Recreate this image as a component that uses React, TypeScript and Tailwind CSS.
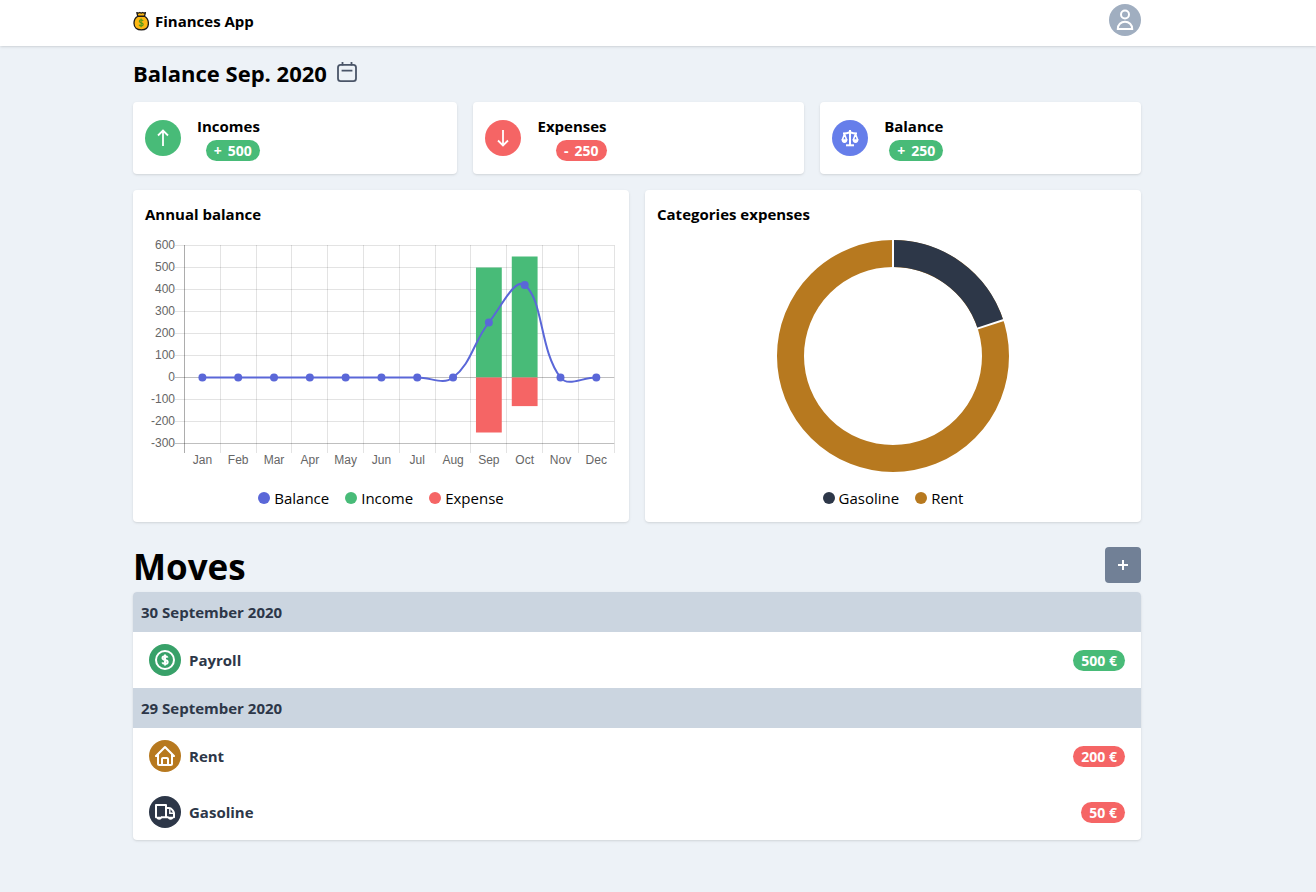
import type { ReactNode } from "react";
import { BiHome } from "react-icons/bi";

const MONTHS = ["Jan", "Feb", "Mar", "Apr", "May", "Jun", "Jul", "Aug", "Sep", "Oct", "Nov", "Dec"];
const BALANCE = [0, 0, 0, 0, 0, 0, 0, 0, 250, 420, 0, 0];
const INCOME = [0, 0, 0, 0, 0, 0, 0, 0, 500, 550, 0, 0];
const EXPENSE = [0, 0, 0, 0, 0, 0, 0, 0, 250, 130, 0, 0];
const TICKS = [600, 500, 400, 300, 200, 100, 0, -100, -200, -300];

const LEFT = 39.5;
const RIGHT = 469.2;
const STEP = (RIGHT - LEFT) / 12;
const xAt = (i: number) => LEFT + STEP * (i + 0.5);
const yAt = (v: number) => 139.5 - v * 0.22;

type Point = { x: number; y: number };

// Cardinal-like spline whose handles are weighted by the distance to each neighbour.
function spline(points: Point[], tension: number): string {
  const handles = points.map((cur, i) => {
    const prev = points[i - 1] ?? cur;
    const next = points[i + 1] ?? cur;
    const d01 = Math.hypot(cur.x - prev.x, cur.y - prev.y);
    const d12 = Math.hypot(next.x - cur.x, next.y - cur.y);
    const fa = (tension * d01) / (d01 + d12);
    const fb = (tension * d12) / (d01 + d12);
    return {
      before: { x: cur.x - fa * (next.x - prev.x), y: cur.y - fa * (next.y - prev.y) },
      after: { x: cur.x + fb * (next.x - prev.x), y: cur.y + fb * (next.y - prev.y) },
    };
  });
  return points
    .map((p, i) => {
      if (i === 0) return `M${p.x} ${p.y}`;
      const a = handles[i - 1].after;
      const b = handles[i].before;
      return `C${a.x} ${a.y} ${b.x} ${b.y} ${p.x} ${p.y}`;
    })
    .join("");
}

function AnnualChart() {
  const points = BALANCE.map((v, i) => ({ x: xAt(i), y: yAt(v) }));
  return (
    <svg viewBox="0 0 472 236" className="block w-full" role="img" aria-label="Annual balance">
      {TICKS.map((t) => (
        <g key={t}>
          <line
            x1={30}
            x2={RIGHT}
            y1={yAt(t)}
            y2={yAt(t)}
            stroke="#000"
            strokeOpacity={t === 0 || t === -300 ? 0.25 : 0.11}
          />
          <text x={30} y={yAt(t) + 3.5} textAnchor="end" className="fill-[#666] text-xs">
            {t}
          </text>
        </g>
      ))}
      {Array.from({ length: 13 }, (_, i) => {
        const x = Math.floor(LEFT + STEP * i) + 0.5;
        return (
          <line key={i} x1={x} x2={x} y1={7} y2={215} stroke="#000" strokeOpacity={i === 0 ? 0.32 : 0.11} />
        );
      })}
      {MONTHS.map((m, i) => (
        <g key={m}>
          <rect x={xAt(i) - 12.9} y={yAt(INCOME[i])} width={25.8} height={INCOME[i] * 0.22} fill="#48bb78" />
          <rect x={xAt(i) - 12.9} y={yAt(0)} width={25.8} height={EXPENSE[i] * 0.22} fill="#f56565" />
          <text x={xAt(i)} y={226} textAnchor="middle" className="fill-[#666] text-xs">
            {m}
          </text>
        </g>
      ))}
      <path d={spline(points, 0.4)} fill="none" stroke="#5a67d8" strokeWidth={2} />
      {points.map((p) => (
        <circle key={p.x} cx={p.x} cy={p.y} r={4} fill="#5a67d8" />
      ))}
    </svg>
  );
}

function CategoriesChart() {
  const cx = 236;
  const cy = 118;
  const r = 102.5;
  const angle = 0.2 * Math.PI * 2;
  const ex = cx + r * Math.sin(angle);
  const ey = cy - r * Math.cos(angle);
  const ray = (a: number) => (
    <line
      x1={cx + 87 * Math.sin(a)}
      y1={cy - 87 * Math.cos(a)}
      x2={cx + 118 * Math.sin(a)}
      y2={cy - 118 * Math.cos(a)}
      stroke="#fff"
      strokeWidth={2}
    />
  );
  return (
    <svg viewBox="0 0 472 236" className="block w-full" role="img" aria-label="Categories expenses">
      <circle cx={cx} cy={cy} r={r} fill="none" stroke="#b7791f" strokeWidth={27} />
      <path d={`M${cx} ${cy - r}A${r} ${r} 0 0 1 ${ex} ${ey}`} fill="none" stroke="#2d3748" strokeWidth={27} />
      {ray(0)}
      {ray(angle)}
    </svg>
  );
}

function MoneyBag() {
  return (
    <svg viewBox="0 0 16 20" className="h-5 w-4" aria-hidden="true">
      <path
        d="M3.800 1.600l1.500.5 1.500-.6 1.400.6 1.500-.6 1.400.6 1.300-.5-.9 3.700c2.400 1.400 3.900 4.100 3.900 7 0 4.100-2.700 6.600-7 6.600S1 16.400 1 12.300c0-2.900 1.400-5.600 3.800-7z"
        fill="#fdb813"
        stroke="#1c1917"
        strokeWidth="1.300"
        strokeLinejoin="round"
      />
      <path d="M4.800 5.200h6.400" stroke="#1c1917" strokeWidth="1.400" strokeLinecap="round" />
      <path
        d="M10.100 10c-.3-.8-1-1.200-1.900-1.200-1.200 0-1.900.6-1.900 1.500 0 2.100 3.900 1 3.900 3.100 0 1-.8 1.600-2 1.600-1.100 0-1.800-.5-2.200-1.300M8.100 7.600v8.600"
        fill="none"
        stroke="#4d9a1c"
        strokeWidth="1.100"
      />
    </svg>
  );
}

function Icon({ children, width = 2 }: { children: ReactNode; width?: number }) {
  return (
    <svg
      viewBox="0 0 24 24"
      className="size-6"
      fill="none"
      stroke="currentColor"
      strokeWidth={width}
      aria-hidden="true"
    >
      {children}
    </svg>
  );
}

const UserIcon = () => (
  <Icon>
    <circle cx="12" cy="6.500" r="4" />
    <path d="M4.800 21h14.400c0-4.200-3.100-7.200-7.200-7.200s-7.200 3-7.200 7.200z" />
  </Icon>
);

const CalendarIcon = () => (
  <Icon width={1.8}>
    <rect x="3" y="4.900" width="18" height="16.200" rx="2.600" />
    <path d="M7.500 2v3.500M16.500 2v3.500M6.600 10.600h10.800" />
  </Icon>
);

const ArrowUpIcon = () => (
  <Icon width={1.8}>
    <path d="M12 20V5M7 9.500l5-5 5 5" />
  </Icon>
);

const ArrowDownIcon = () => (
  <Icon width={1.8}>
    <path d="M12 4v15M7 14.500l5 5 5-5" />
  </Icon>
);

const ScaleIcon = () => (
  <Icon width={1.6}>
    <path d="M12 4v15.500M5 7.600c2.500 0 4.500-.3 7-1.300 2.500 1 4.500 1.300 7 1.300" strokeWidth="2" />
    <path d="M8 19.300h8" strokeWidth="2" />
    <path d="M6.500 8l-2.200 6M6.500 8l2.200 6M17.500 8l-2.200 6M17.500 8l2.200 6" strokeWidth="1.600" />
    <path
      d="M3.500 13.200h6c0 2.300-1.200 3.700-3 3.700s-3-1.400-3-3.700zM14.500 13.200h6c0 2.300-1.200 3.700-3 3.700s-3-1.400-3-3.700z"
      fill="currentColor"
      stroke="none"
    />
  </Icon>
);

const DollarIcon = () => (
  <Icon>
    <circle cx="12" cy="12" r="9" />
    <path d="M14.600 9.600c-.4-.9-1.400-1.300-2.600-1.300-1.500 0-2.500.7-2.500 1.800 0 2.600 5.200 1.200 5.200 3.800 0 1.200-1.100 1.900-2.700 1.900-1.300 0-2.300-.5-2.700-1.500M12 6.400v11.200" />
  </Icon>
);

const TruckIcon = () => (
  <Icon>
    <path
      d="M4 17.300H3V5h10v12.300H8M13 8h3c1.200 0 2.200.5 3 1.500l1.200 1.600c.5.700.8 1.400.8 2.200v4h-1M15.500 17.300H13"
      strokeLinejoin="round"
    />
    <path d="M16.800 8v5.200H21" strokeWidth="1.400" />
    <path
      d="M3.400 16.800a2.800 3 0 0 0 5.600 0zM14.800 16.800a2.800 3 0 0 0 5.600 0z"
      fill="currentColor"
      stroke="none"
    />
  </Icon>
);

const PlusIcon = () => (
  <Icon width={2}>
    <path d="M12 7v10M7 12h10" />
  </Icon>
);

function Pill({ positive, children }: { positive: boolean; children: ReactNode }) {
  return (
    <span
      className={`inline-flex rounded-full px-2 text-sm leading-[21px] font-bold text-white ${
        positive ? "bg-[#48bb78]" : "bg-[#f56565]"
      }`}
    >
      {children}
    </span>
  );
}

type SummaryProps = { title: string; amount: number; color: string; icon: ReactNode };

function Summary({ title, amount, color, icon }: SummaryProps) {
  return (
    <section className="flex flex-auto items-center gap-4 rounded bg-white p-3 shadow">
      <span className={`flex size-9 items-center justify-center rounded-full text-white ${color}`}>{icon}</span>
      <div className="flex flex-col items-end">
        <h2 className="leading-6 font-bold">{title}</h2>
        <div className="flex h-6 items-center">
          <Pill positive={amount > 0}>
            <span className="flex gap-1.5">
              <span>{amount > 0 ? "+" : "-"}</span>
              <span>{Math.abs(amount)}</span>
            </span>
          </Pill>
        </div>
      </div>
    </section>
  );
}

type ChartCardProps = { title: string; legend: { label: string; color: string }[]; children: ReactNode };

function ChartCard({ title, legend, children }: ChartCardProps) {
  return (
    <section className="flex min-w-0 flex-1 flex-col gap-3 rounded bg-white p-3 shadow">
      <h2 className="leading-6 font-bold">{title}</h2>
      <div className="font-['Liberation_Sans',Arial,sans-serif]">{children}</div>
      <ul className="flex justify-center gap-4">
        {legend.map((item) => (
          <li key={item.label} className="flex items-center gap-1 leading-6">
            <span className={`size-3 rounded-full ${item.color}`} />
            {item.label}
          </li>
        ))}
      </ul>
    </section>
  );
}

type Move = { name: string; amount: string; positive: boolean; color: string; icon: ReactNode };

const DAYS: { date: string; moves: Move[] }[] = [
  {
    date: "30 September 2020",
    moves: [{ name: "Payroll", amount: "500 €", positive: true, color: "bg-[#38a169]", icon: <DollarIcon /> }],
  },
  {
    date: "29 September 2020",
    moves: [
      { name: "Rent", amount: "200 €", positive: false, color: "bg-[#b7791f]", icon: <BiHome className="size-6" /> },
      { name: "Gasoline", amount: "50 €", positive: false, color: "bg-[#2d3748]", icon: <TruckIcon /> },
    ],
  },
];

export default function App() {
  return (
    <div className="min-h-screen bg-[#edf2f7] font-['Open_Sans','Noto_Sans',sans-serif] text-[15px] text-black">
      <header className="bg-white pt-1 pr-[42px] pb-2.5 shadow">
        <div className="mx-auto flex max-w-[1008px] items-center justify-between">
          <a href="#" className="flex items-center gap-1.5 pt-0.5 leading-6 font-bold">
            <MoneyBag />
            Finances App
          </a>
          <button
            type="button"
            aria-label="Account"
            className="flex size-8 items-center justify-center rounded-full bg-[#a0aec0] text-white"
          >
            <UserIcon />
          </button>
        </div>
      </header>
      <div className="pr-[42px]">
        <main className="mx-auto flex max-w-[1008px] flex-col">
          <div className="flex h-14 items-center gap-2">
            <h1 className="pb-0.5 text-[22px] font-bold">Balance Sep. 2020</h1>
            <button type="button" aria-label="Choose month" className="pb-1 text-[#4a5568]">
              <CalendarIcon />
            </button>
          </div>
          <div className="flex gap-4">
            <Summary title="Incomes" amount={500} color="bg-[#48bb78]" icon={<ArrowUpIcon />} />
            <Summary title="Expenses" amount={-250} color="bg-[#f56565]" icon={<ArrowDownIcon />} />
            <Summary title="Balance" amount={250} color="bg-[#667eea]" icon={<ScaleIcon />} />
          </div>
          <div className="mt-4 flex gap-4">
            <ChartCard
              title="Annual balance"
              legend={[
                { label: "Balance", color: "bg-[#5a67d8]" },
                { label: "Income", color: "bg-[#48bb78]" },
                { label: "Expense", color: "bg-[#f56565]" },
              ]}
            >
              <AnnualChart />
            </ChartCard>
            <ChartCard
              title="Categories expenses"
              legend={[
                { label: "Gasoline", color: "bg-[#2d3748]" },
                { label: "Rent", color: "bg-[#b7791f]" },
              ]}
            >
              <CategoriesChart />
            </ChartCard>
          </div>
          <div className="mt-5 flex items-center justify-between">
            <h2 className="text-[35px] leading-[50px] font-bold">Moves</h2>
            <button
              type="button"
              aria-label="Add move"
              className="mb-1 flex size-9 items-center justify-center rounded bg-[#718096] text-white"
            >
              <PlusIcon />
            </button>
          </div>
          <div className="mb-10 overflow-hidden rounded bg-white font-bold text-[#2d3748] shadow">
            {DAYS.map((day) => (
              <section key={day.date}>
                <h3 className="bg-[#cbd5e0] p-2 leading-6">{day.date}</h3>
                <ul>
                  {day.moves.map((move) => (
                    <li key={move.name} className="flex items-center gap-2 px-4 py-3">
                      <span className={`flex size-8 items-center justify-center rounded-full text-white ${move.color}`}>
                        {move.icon}
                      </span>
                      <span className="flex-1">{move.name}</span>
                      <Pill positive={move.positive}>{move.amount}</Pill>
                    </li>
                  ))}
                </ul>
              </section>
            ))}
          </div>
        </main>
      </div>
    </div>
  );
}
